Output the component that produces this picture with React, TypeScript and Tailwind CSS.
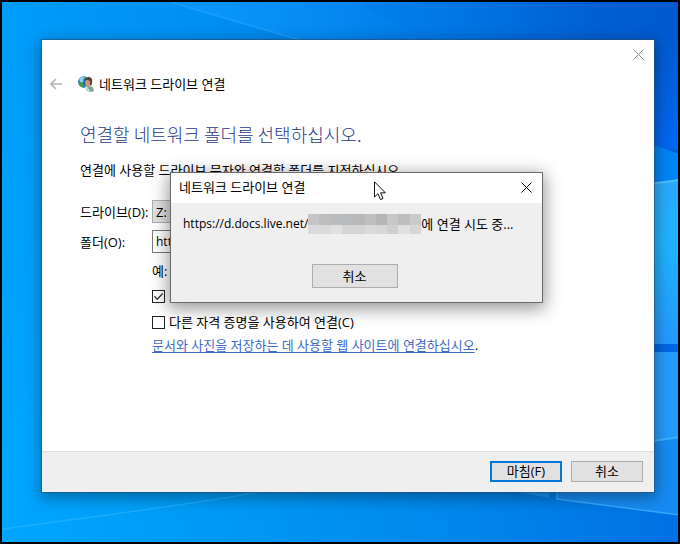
import React from 'react';

const fontStack = "font-['Open_Sans','Noto_Sans_CJK_KR',sans-serif]";

function Wallpaper() {
  return (
    <svg className="absolute inset-0 h-full w-full" viewBox="2 2 676 540" preserveAspectRatio="none" aria-hidden="true">
      <defs>
        <linearGradient id="sky" x1="0" y1="0" x2="1" y2="0">
          <stop offset="0" stopColor="#009cf9" />
          <stop offset="0.3" stopColor="#008ff2" />
          <stop offset="0.65" stopColor="#0078e6" />
          <stop offset="0.88" stopColor="#005fd2" />
          <stop offset="1" stopColor="#0059cf" />
        </linearGradient>
        <linearGradient id="floor" x1="0" y1="0" x2="1" y2="0">
          <stop offset="0" stopColor="#00a6ff" />
          <stop offset="0.35" stopColor="#0098f4" />
          <stop offset="0.7" stopColor="#0085ea" />
          <stop offset="1" stopColor="#0070e4" />
        </linearGradient>
        <linearGradient id="left" x1="0" y1="0" x2="0" y2="1">
          <stop offset="0" stopColor="#00a6ff" stopOpacity="0" />
          <stop offset="1" stopColor="#00a6ff" />
        </linearGradient>
        <linearGradient id="side" x1="0" y1="0" x2="0" y2="1">
          <stop offset="0" stopColor="#005bd2" />
          <stop offset="1" stopColor="#0068f0" />
        </linearGradient>
        <linearGradient id="pane" x1="0" y1="0" x2="0" y2="1">
          <stop offset="0" stopColor="#2aa9ff" />
          <stop offset="0.4" stopColor="#1fb2ff" />
          <stop offset="1" stopColor="#2498fb" />
        </linearGradient>
        <linearGradient id="ray" x1="0" y1="0" x2="1" y2="0">
          <stop offset="0" stopColor="#0e98fc" stopOpacity="0.8" />
          <stop offset="1" stopColor="#0e98fc" stopOpacity="0" />
        </linearGradient>
      </defs>
      <rect width="680" height="544" fill="url(#sky)" />
      <rect y="480" width="680" height="64" fill="url(#floor)" />
      <rect width="60" height="480" fill="url(#left)" />
      <rect x="650" y="40" width="30" height="110" fill="url(#side)" />
      <path d="M170 2 L245 24 L300 40 H420 L360 2Z" fill="url(#ray)" />
      <path d="M170 2 L245 24 L300 40" stroke="#2aa5ff" strokeWidth="1.5" fill="none" opacity="0.6" />
      <path d="M640 141 L680 154 V182 H640Z" fill="#0084f6" />
      <path d="M640 185 L680 180 V344 H640Z" fill="url(#pane)" />
      <path d="M640 185 L680 180" stroke="#4cc2ff" strokeWidth="2" />
      <rect x="640" y="344" width="40" height="8" fill="#0066e4" />
      <path d="M557 352 H680 V515 L557 499Z" fill="#249bfa" />
      <path d="M640 443 L680 437 V515 L557 499 V480Z" fill="#168af2" />
      <path d="M640 443 L680 437" stroke="#35b5ff" strokeWidth="2" />
      <path d="M557 485 V499 L680 515" stroke="#35a8fa" strokeWidth="1.5" fill="none" />
      <path d="M500 488 L549 498 V485Z" fill="#1797f2" />
      <path d="M2 529 C80 518 170 508 260 492" stroke="#2fb6ff" strokeWidth="1.5" fill="none" opacity="0.6" />
    </svg>
  );
}

function CloseIcon({ className }: { className: string }) {
  return (
    <svg className={className} viewBox="0 0 11 11" fill="none" stroke="currentColor" aria-hidden="true">
      <path d="M0.5 0.5 L10.5 10.5 M10.5 0.5 L0.5 10.5" />
    </svg>
  );
}

function NetworkUserIcon() {
  return (
    <svg className="h-4 w-4 shrink-0" viewBox="0 0 16 16" aria-hidden="true">
      <circle cx="5.8" cy="6" r="5.7" fill="#1f68ae" />
      <path d="M1 4 C2.5 1 5 0.4 7 1 L5 4 L5.5 6 L3 7Z" fill="#8fd3f5" />
      <path d="M0.3 5.5 L3 6 L6 9 L5.5 11.5 C2 10.8 0.5 8.5 0.3 5.5Z" fill="#3da042" />
      <path d="M6.5 0.5 L9 1.4 L8 3 L6.3 2.6Z" fill="#58b64c" />
      <path d="M8 13.5 C7.5 11.5 9 10 11 10 C14 9.8 16.2 12 15.8 15.5 L12 16 L9.5 15Z" fill="#78ab90" />
      <path d="M6.5 9.5 L9.3 11 L12 15.5 L10 15Z" fill="#d3e6e0" />
      <ellipse cx="10" cy="6.6" rx="2.8" ry="3.9" fill="#d09b72" />
      <path d="M7 4.6 C7 1.8 9 0.8 11 1 C14.2 1.2 15 5 13.6 9 L12 9.4 L11.8 4.8 L9 4Z" fill="#584034" />
    </svg>
  );
}

const mosaic = [
  ['#c5c5c5', '#bdbdbd', '#b9bcbc', '#b7bbbc', '#b8b8b8', '#bfbfbf', '#b5b5b5', '#c7c7c7', '#bebebe', '#c8cacb'],
  ['#dadada', '#dadada', '#e0e0e0', '#d4d4d4', '#d4d4d4', '#dadada', '#d7d7d7', '#cfcfcf', '#e0e0e0', '#d6d6d6'],
];

function RedactedPath() {
  return (
    <svg className="h-5 w-[113px] shrink-0" viewBox="0 0 10 20" preserveAspectRatio="none" shapeRendering="crispEdges" aria-hidden="true">
      {mosaic.map((row, r) =>
        row.map((fill, c) => <rect key={`${r}-${c}`} x={c} y={r * 11} width="1" height={r ? 9 : 11} fill={fill} />),
      )}
    </svg>
  );
}

function Cursor() {
  return (
    <svg className="absolute left-[203px] top-2 h-5 w-3" viewBox="0 0 12 20" aria-hidden="true">
      <path d="M0.5 0.8 V16 L4 12.7 L6.5 18.6 L9 17.5 L6.6 11.8 H11.4Z" fill="#fff" stroke="#111" />
    </svg>
  );
}

function ProgressDialog() {
  return (
    <section
      role="dialog"
      aria-labelledby="progress-title"
      className="absolute left-32 top-[132px] w-[373px] border border-[#6a6a6a] bg-[#efefef] shadow-[0_4px_16px_2px_rgba(0,0,0,0.4)]"
    >
      <header className="flex h-[30px] items-center justify-between bg-white pb-0.5 pl-2 pr-[10px]">
        <h2 id="progress-title">네트워크 드라이브 연결</h2>
        <button type="button" aria-label="닫기">
          <CloseIcon className="h-[11px] w-[11px]" />
        </button>
      </header>
      <p className="mt-[11px] flex items-center pl-3">
        <span className="text-xs leading-5">https://d.docs.live.net/</span>
        <RedactedPath />
        <span>에 연결 시도 중...</span>
      </p>
      <div className="mb-[14px] mt-[30px] flex justify-center pr-1">
        <button type="button" className="h-6 w-[86px] border border-[#adadad] bg-[#e1e1e1] leading-5">
          취소
        </button>
      </div>
      <Cursor />
    </section>
  );
}

function Tick({ id, label, checked }: { id: string; label: string; checked?: boolean }) {
  return (
    <div className="flex h-[26px] items-center gap-1">
      <span className="relative h-[13px] w-[13px]">
        <input
          id={id}
          type="checkbox"
          defaultChecked={checked}
          className="peer block h-[13px] w-[13px] appearance-none border border-[#222] bg-white"
        />
        <svg
          className="pointer-events-none absolute inset-0 hidden h-[13px] w-[13px] peer-checked:block"
          viewBox="0 0 13 13"
          fill="none"
          stroke="#333"
          strokeWidth="1.3"
          aria-hidden="true"
        >
          <path d="M2.5 6.3 L5.2 9.2 L10.7 3.5" />
        </svg>
      </span>
      <label htmlFor={id}>{label}</label>
    </div>
  );
}

export default function App() {
  return (
    <div className={`flex min-h-screen bg-black p-0.5 text-[13px] leading-5 text-black ${fontStack}`}>
      <div className="relative flex flex-1 pb-[50px] pl-10 pr-6 pt-[38px]">
        <Wallpaper />
        <main className="relative flex flex-1 flex-col bg-white shadow-[0_0_0_1px_rgba(40,80,120,0.6),0_4px_14px_2px_rgba(0,0,0,0.35)]">
          <div className="flex h-7 items-center justify-end pr-[10px] text-[#8a8a8a]">
            <button type="button" aria-label="닫기">
              <CloseIcon className="h-[11px] w-[11px]" />
            </button>
          </div>
          <header className="mt-1.5 flex items-center pl-2">
            <button type="button" aria-label="뒤로" className="text-[#b4b4b4]">
              <svg className="h-3 w-3" viewBox="0 0 12 12" fill="none" stroke="currentColor" strokeWidth="1.7" aria-hidden="true">
                <path d="M12 6 H1 M6 1 L1 6 L6 11" />
              </svg>
            </button>
            <span className="ml-4">
              <NetworkUserIcon />
            </span>
            <span className="ml-[5px]">네트워크 드라이브 연결</span>
          </header>

          <div className="flex flex-1 flex-col pl-[38px] pr-6 pt-7">
            <h1 className="font-['Noto_Sans_CJK_KR',sans-serif] text-lg font-light leading-6 text-[#263a8c]">
              연결할 네트워크 폴더를 선택하십시오.
            </h1>
            <p className="mt-3.5">연결에 사용할 드라이브 문자와 연결할 폴더를 지정하십시오.</p>
            <div className="mt-5 grid grid-cols-[72px_1fr] items-center gap-y-[7px]">
              <label htmlFor="drive">드라이브(D):</label>
              <select id="drive" className="h-[23px] w-[300px] appearance-none border border-[#adadad] bg-[#e1e1e1] px-[3px]">
                <option>Z:</option>
              </select>
              <label htmlFor="folder">폴더(O):</label>
              <input
                id="folder"
                type="text"
                defaultValue="https://d.docs.live.net/"
                className="h-[23px] w-[300px] border border-[#7a7a7a] bg-white px-[3px] text-xs"
              />
            </div>
            <div className="pl-[72px] pt-2">
              <p>{'예: \\\\server\\share'}</p>
              <div className="mt-0.5">
                <Tick id="reconnect" label="로그온할 때 다시 연결(R)" checked />
                <Tick id="credentials" label="다른 자격 증명을 사용하여 연결(C)" />
              </div>
              <p>
                <a href="#website" className="text-[#3d6bc6] underline underline-offset-2">
                  문서와 사진을 저장하는 데 사용할 웹 사이트에 연결하십시오
                </a>
                .
              </p>
            </div>
          </div>

          <footer className="flex h-[41px] items-center justify-end gap-[9px] border-t border-[#dcdcdc] bg-[#efefef] pb-0.5 pr-[11px]">
            <button type="button" className="h-[21px] w-[72px] border-2 border-[#0078d7] bg-[#e1e1e1] leading-4">
              마침(F)
            </button>
            <button type="button" className="h-[21px] w-[72px] border border-[#adadad] bg-[#e1e1e1] leading-4">
              취소
            </button>
          </footer>
          <ProgressDialog />
        </main>
      </div>
    </div>
  );
}
